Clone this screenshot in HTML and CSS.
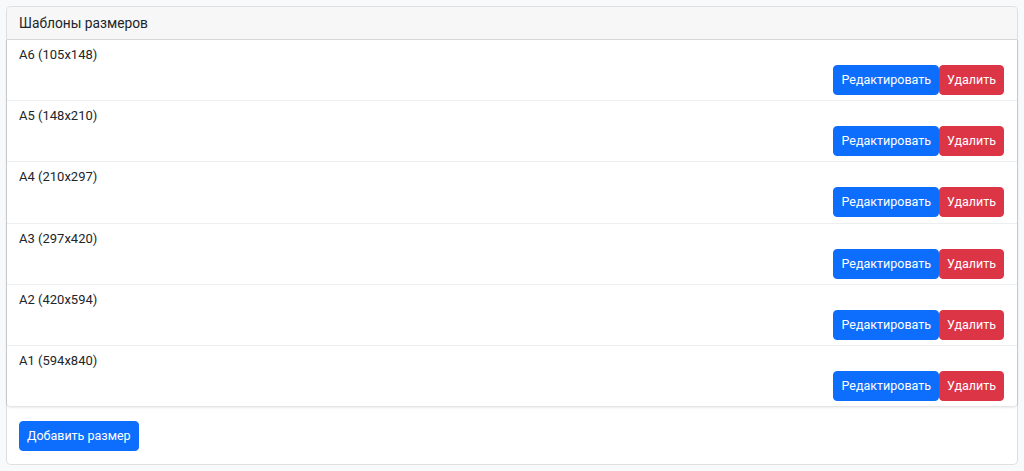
FILE: index.html
```html
<!DOCTYPE html>
<html lang="ru">
<head>
    <meta charset="UTF-8">
    <meta name="viewport" content="width=device-width, initial-scale=1.0">
    <title>Шаблоны размеров</title>
    <link rel="stylesheet" href="styles.css">
</head>
<body>
    <div class="card">
        <div class="card-header">Шаблоны размеров</div>
        <ul class="size-list">
            <li class="size-item">
                <div class="size-name">A6 (105x148)</div>
                <div class="size-actions"><button class="btn btn-primary">Редактировать</button><button class="btn btn-danger">Удалить</button></div>
            </li>
            <li class="size-item">
                <div class="size-name">A5 (148x210)</div>
                <div class="size-actions"><button class="btn btn-primary">Редактировать</button><button class="btn btn-danger">Удалить</button></div>
            </li>
            <li class="size-item">
                <div class="size-name">A4 (210x297)</div>
                <div class="size-actions"><button class="btn btn-primary">Редактировать</button><button class="btn btn-danger">Удалить</button></div>
            </li>
            <li class="size-item">
                <div class="size-name">A3 (297x420)</div>
                <div class="size-actions"><button class="btn btn-primary">Редактировать</button><button class="btn btn-danger">Удалить</button></div>
            </li>
            <li class="size-item">
                <div class="size-name">A2 (420x594)</div>
                <div class="size-actions"><button class="btn btn-primary">Редактировать</button><button class="btn btn-danger">Удалить</button></div>
            </li>
            <li class="size-item">
                <div class="size-name">A1 (594x840)</div>
                <div class="size-actions"><button class="btn btn-primary">Редактировать</button><button class="btn btn-danger">Удалить</button></div>
            </li>
        </ul>
        <div class="card-body">
            <button class="btn btn-primary">Добавить размер</button>
        </div>
    </div>
</body>
</html>
```

FILE: styles.css
```css
body {
    font-family: "Segoe UI", Roboto, Arial, sans-serif;
    font-size: 14px;
    margin: 0;
    padding: 6px 6px 0 6px;
    background-color: #f8f9fa;
    color: #212529;
}
.card {
    background: white;
    border: 1px solid rgba(0, 0, 0, 0.125);
    border-radius: 5px;
}
.card-header {
    padding: 6px 12px;
    font-size: 13.75px;
    line-height: 20px;
    background-color: #f7f7f7;
    border-bottom: 1px solid rgba(0, 0, 0, 0.125);
    border-radius: 5px 5px 0 0;
}
.size-list {
    list-style: none;
    margin: 0 -1px 0 -1px;
    padding: 0;
    border: 1px solid rgba(0, 0, 0, 0.1);
    border-top: none;
    border-radius: 0 0 5px 5px;
    box-shadow: 0 1px 2px rgba(0, 0, 0, 0.08);
}
.size-item {
    padding: 5px 13px 5.2px 12px;
    border-bottom: 1px solid #eceef0;
}
.size-item:last-child {
    border-bottom: none;
}
.size-name {
    font-size: 13px;
    line-height: 20px;
}
.size-actions {
    display: flex;
    justify-content: flex-end;
}
.card-body {
    padding: 14px 12px 13px 12px;
}
.btn {
    font-family: inherit;
    font-size: 12.5px;
    line-height: 20px;
    padding: 4px 7px;
    border: 1px solid transparent;
    border-radius: 4px;
    color: white;
    cursor: pointer;
}
.btn-primary {
    background-color: #0d6efd;
    border-color: #0d6efd;
}
.btn-danger {
    background-color: #dc3545;
    border-color: #dc3545;
}
```
